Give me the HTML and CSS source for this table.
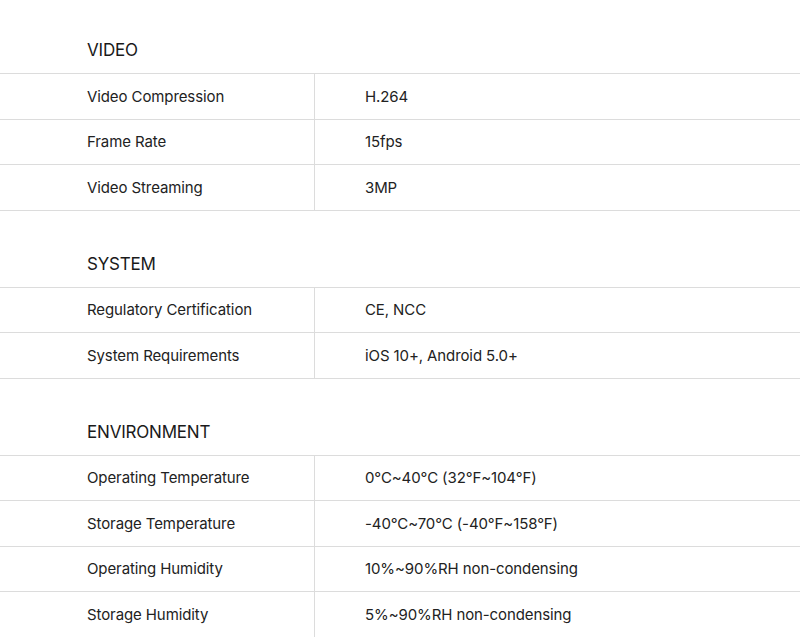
FILE: index.html
```html
<!DOCTYPE html>
<html lang="en">
<head>
<meta charset="utf-8">
<title>Specifications</title>
<link rel="stylesheet" href="styles.css">
</head>
<body>
<div class="specs">
  <section class="group">
    <h2 class="group-title">VIDEO</h2>
    <div class="rows">
      <div class="row"><div class="label">Video Compression</div><div class="value">H.264</div></div>
      <div class="row"><div class="label">Frame Rate</div><div class="value">15fps</div></div>
      <div class="row"><div class="label">Video Streaming</div><div class="value">3MP</div></div>
    </div>
  </section>
  <section class="group">
    <h2 class="group-title">SYSTEM</h2>
    <div class="rows">
      <div class="row"><div class="label">Regulatory Certification</div><div class="value">CE, NCC</div></div>
      <div class="row"><div class="label">System Requirements</div><div class="value">iOS 10+, Android 5.0+</div></div>
    </div>
  </section>
  <section class="group">
    <h2 class="group-title">ENVIRONMENT</h2>
    <div class="rows">
      <div class="row"><div class="label">Operating Temperature</div><div class="value">0°C~40°C (32°F~104°F)</div></div>
      <div class="row"><div class="label">Storage Temperature</div><div class="value">-40°C~70°C (-40°F~158°F)</div></div>
      <div class="row"><div class="label">Operating Humidity</div><div class="value">10%~90%RH non-condensing</div></div>
      <div class="row"><div class="label">Storage Humidity</div><div class="value">5%~90%RH non-condensing</div></div>
    </div>
  </section>
</div>
</body>
</html>
```
FILE: styles.css
```css
* { box-sizing: border-box; }
html, body { margin: 0; padding: 0; background: #fff; }
body {
  font-family: "Inter", "Roboto", "Liberation Sans", sans-serif;
  color: #222;
  overflow: hidden;
}
.specs { padding-top: 27px; display: flex; flex-direction: column; gap: 30px; }
.group-title {
  margin: 0;
  height: 46px;
  display: flex;
  align-items: center;
  padding-left: 87px;
  font-size: 17px;
  font-weight: 400;
  letter-spacing: -0.2px;
  color: #1a1a1a;
}
.rows { border-top: 1px solid #dcdcdc; }
.row {
  display: grid;
  grid-template-columns: 315px 1fr;
  height: 45.5px;
  border-bottom: 1px solid #dcdcdc;
}
.label, .value {
  display: flex;
  align-items: center;
  font-size: 15px;
  letter-spacing: -0.1px;
}
.label { padding-left: 87px; border-right: 1px solid #dcdcdc; }
.value { padding-left: 50px; }
```
